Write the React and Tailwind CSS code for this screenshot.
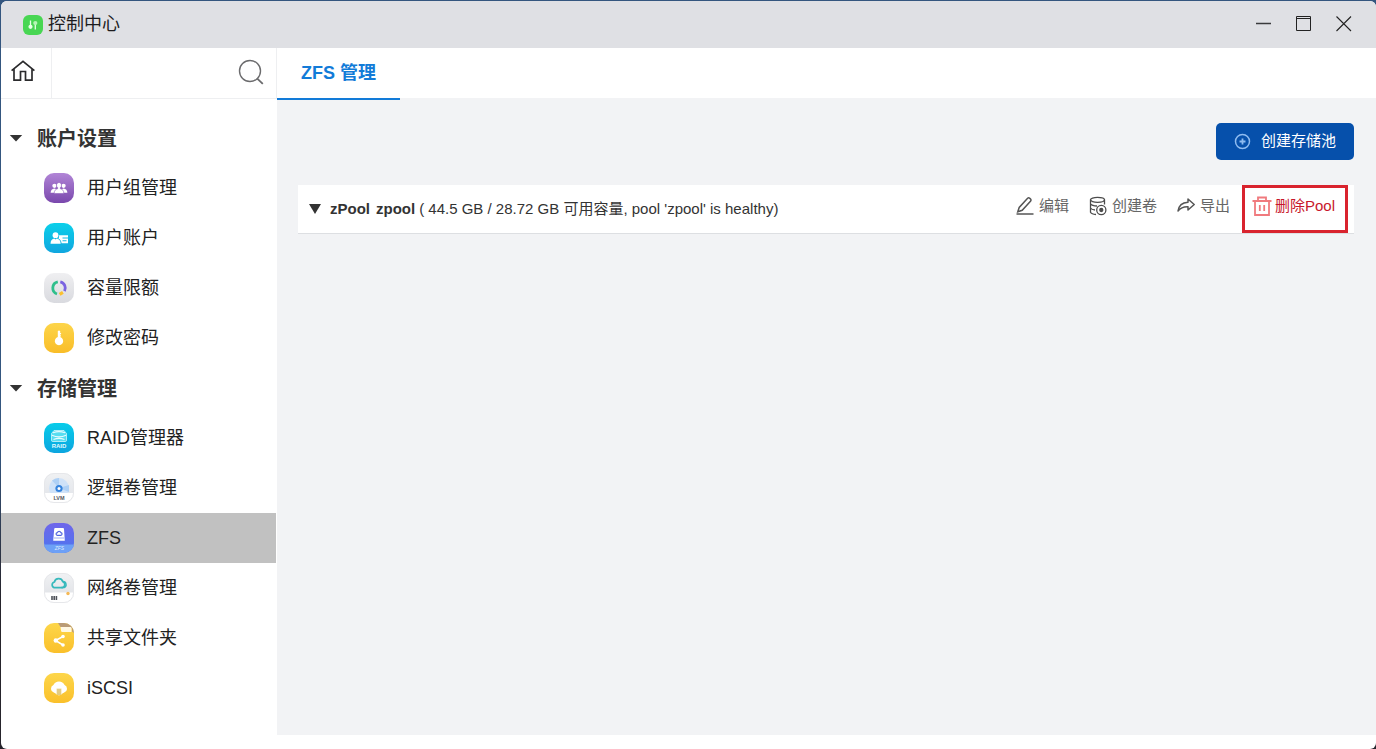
import React from "react";

function Tile({ id, from, to, children, ring }) {
  return (
    <svg viewBox="0 0 30 30" className="size-[30px] shrink-0" aria-hidden="true">
      <defs>
        <linearGradient id={id} x1="0" y1="0" x2="0" y2="1">
          <stop offset="0" stopColor={from} />
          <stop offset="1" stopColor={to} />
        </linearGradient>
        <clipPath id={id + "-clip"}>
          <rect width="30" height="30" rx="10" />
        </clipPath>
      </defs>
      <g clipPath={`url(#${id}-clip)`}>
        <rect width="30" height="30" fill={`url(#${id})`} />
        {children}
      </g>
      {ring && <rect x="0.5" y="0.5" width="29" height="29" rx="9.5" fill="none" stroke="#e6e7ea" />}
    </svg>
  );
}

const GroupIcon = () => (
  <Tile id="group" from="#b185d6" to="#7a48ad">
    <g fill="#fff">
      <circle cx="10.4" cy="12.8" r="2.1" />
      <circle cx="19.6" cy="12.8" r="2.1" />
      <path d="M6.600 19.800c0-2.500 1.600-3.900 3.700-4.300 1.200.2 1.700.6 1.900 1.100v3.200zM23.400 19.800c0-2.500-1.600-3.900-3.700-4.300-1.200.2-1.700.6-1.900 1.100v3.200z" />
      <path d="M15 9.400a2.700 2.900 0 0 1 1.300 5.300v1c2.200.5 3.500 1.800 3.500 4.800h-9.600c0-3 1.300-4.300 3.500-4.800v-1a2.700 2.900 0 0 1 1.300-5.300z" stroke="#8f60bd" strokeWidth=".6" />
    </g>
  </Tile>
);

const AccountIcon = () => (
  <Tile id="account" from="#0bd0ea" to="#10a6df">
    <g fill="#fff">
      <circle cx="11.500" cy="12.200" r="2.900" />
      <path d="M6.500 20.700c.1-3.200 1.600-4.700 3.900-5.200l1.100 1 1.100-1c2.300.5 4 2 4.100 5.200z" />
      <path d="M15 12.200h9v8h-6.400c-.2-2.100-1.200-3.800-3.200-4.700.6-.8.900-2 .6-3.300z" />
      <path d="M18.500 14.400h5.500v1.100h-5.500zM18.500 17.200h4v1.100h-4z" fill="#12b9e4" />
    </g>
  </Tile>
);

const QuotaIcon = () => (
  <Tile id="quota" from="#efeff1" to="#d9dadf">
    <g fill="none" strokeWidth="2.800">
      <path d="M13.800 8.900a6.300 6.300 0 0 0-.8 12.100" stroke="#2fbf8c" />
      <path d="M16.300 8.900a6.300 6.300 0 0 1 4.200 9.200" stroke="#7a63e0" />
      <path d="M15.600 21.300l3.300-2" stroke="#fbc02f" strokeWidth="3.200" />
    </g>
  </Tile>
);

const PasswordIcon = () => (
  <Tile id="password" from="#fdd54a" to="#f9bd28">
    <path d="M13.800 8q1.200-1 2.400 0v2h.9v1.300h-.9v1h.7v1.200h-.7v.6a4.200 4.200 0 1 1-2.400 0z" fill="#fff" />
  </Tile>
);

const RaidIcon = () => (
  <Tile id="raid" from="#08ccea" to="#0ca5df">
    <g fill="none" stroke="#e6fbff" strokeWidth="1">
      <path d="M10 7.500h10l2.500 3v6.800q0 1.200-1.200 1.200H8.700q-1.200 0-1.200-1.200v-6.800z" fill="#57ddf0" strokeWidth=".7" />
      <path d="M9 9.800q6-2.200 12 0M8 12.200q7 3.200 14 0M9.500 16.500q5.500-2.400 11 0" strokeWidth="1.200" />
    </g>
    <text x="15" y="24.500" textAnchor="middle" fontSize="6" fontWeight="700" fill="#e6fbff" fontFamily="Liberation Sans, sans-serif">RAID</text>
  </Tile>
);

const LvmIcon = () => (
  <Tile id="lvm" from="#f0f1f3" to="#dfe2e8" ring>
    <circle cx="15" cy="15" r="10" fill="#cfe2f8" />
    <path d="M15 15L8 7.500A10 10 0 0 1 15 5zM15 15l10-3v7z" fill="#aed0f5" />
    <circle cx="15" cy="15.500" r="3.600" fill="#3583dd" />
    <circle cx="15" cy="15.500" r="1.500" fill="#fff" />
    <rect y="20" width="30" height="10" fill="#fff" />
    <text x="15" y="26.500" textAnchor="middle" fontSize="5.500" fontWeight="700" fill="#55585e" fontFamily="Liberation Sans, sans-serif">LVM</text>
  </Tile>
);

const ZfsIcon = () => (
  <Tile id="zfs" from="#6f66ea" to="#4b76ef">
    <rect y="21.500" width="30" height="9" fill="#6da0f6" />
    <path d="M11.200 5h7.800q1 0 1 1l.8 11.700H9.200L10.200 6q0-1 1-1z" fill="#fff" />
    <path d="M13 12.300a1.400 1.400 0 0 1 .3-2.700 1.900 1.900 0 0 1 3.600 0 1.400 1.400 0 0 1 .2 2.700z" fill="none" stroke="#5568df" strokeWidth="1.200" />
    <path d="M10 15h10" stroke="#8b9bee" strokeWidth=".8" />
    <text x="15.500" y="27.400" textAnchor="middle" fontSize="5" fontStyle="italic" fill="#dce9ff" fontFamily="Liberation Sans, sans-serif">ZFS</text>
  </Tile>
);

const NetVolumeIcon = () => (
  <Tile id="netvol" from="#f1f2f4" to="#dcdee3" ring>
    <rect y="19.500" width="30" height="11" fill="#fff" />
    <path d="M10.200 14.600a2.900 2.900 0 0 1 .2-5.600 4.400 4.400 0 0 1 8.400-.4 3.200 3.200 0 0 1-.2 6z" fill="none" stroke="#37b9bc" strokeWidth="1.700" />
    <path d="M19 8.500a3.200 3.200 0 0 1 1.200 6.100h-3" fill="none" stroke="#37b9bc" strokeWidth="1.500" />
    <path d="M8 23v4M10.200 23v4M12.400 23v4" stroke="#50545b" strokeWidth="1.600" />
    <circle cx="24" cy="20.500" r="1.700" fill="#f5b957" />
  </Tile>
);

const ShareIcon = () => (
  <Tile id="share" from="#fdd64a" to="#fac02b">
    <path d="M14 0h16v10l-2-1.500V6q0-1-1-1h-9q-1 0-1.500-1z" fill="#b99b78" />
    <path d="M16.500 4h10q1 0 1 1v4h-9q-1.500 0-1.500-1.500z" fill="#fff8e2" />
    <path d="M19 13.500l-7.500 4 7.500 4.500" fill="none" stroke="#fff" strokeWidth="1.500" />
    <g fill="#fff">
      <circle cx="19" cy="13.500" r="1.800" />
      <circle cx="11.800" cy="17.500" r="2.200" />
      <circle cx="19" cy="22" r="1.800" />
    </g>
  </Tile>
);

const IscsiIcon = () => (
  <Tile id="iscsi" from="#fdd64a" to="#fac02b">
    <path d="M9.800 19.500a4 4 0 0 1-.4-7.500 6.200 6.200 0 0 1 11.200 0 4 4 0 0 1-.4 7.500L15 22.500z" fill="#fff" />
    <path d="M12.500 15.500h5v6.500h-5z" fill="#f1dfa4" />
    <path d="M13 17h4M13 19h4M13 21h4" stroke="#cfae57" strokeWidth=".8" />
  </Tile>
);

const sections = [
  {
    title: "账户设置",
    items: [
      ["用户组管理", GroupIcon],
      ["用户账户", AccountIcon],
      ["容量限额", QuotaIcon],
      ["修改密码", PasswordIcon],
    ],
  },
  {
    title: "存储管理",
    items: [
      ["RAID管理器", RaidIcon],
      ["逻辑卷管理", LvmIcon],
      ["ZFS", ZfsIcon],
      ["网络卷管理", NetVolumeIcon],
      ["共享文件夹", ShareIcon],
      ["iSCSI", IscsiIcon],
    ],
  },
];

function TitleBar() {
  return (
    <header className="flex h-[47px] shrink-0 items-center bg-[#dfe0e4] pb-[2px] pl-[22px] pr-6">
      <svg viewBox="0 0 20 20" className="mr-[5px] mt-[2px] size-5" aria-hidden="true">
        <rect width="20" height="20" rx="6" fill="#48d653" />
        <path d="M7.500 5.500v6M12.300 8.500v6" stroke="#e6ffe6" strokeWidth="1.300" />
        <circle cx="7.500" cy="11.800" r="2.100" fill="#e6ffe6" />
        <circle cx="12.300" cy="8" r="2.100" fill="#b5f5b5" />
      </svg>
      <h1 className="flex-1 text-[18px] leading-6 text-[#1c1c1e]">控制中心</h1>
      <div className="flex gap-6">
        <button type="button" aria-label="最小化">
          <svg viewBox="0 0 16 16" className="size-4" fill="none" stroke="#3a3a3c">
            <path d="M0 7.500h15" strokeWidth="1.400" />
          </svg>
        </button>
        <button type="button" aria-label="最大化">
          <svg viewBox="0 0 16 16" className="size-4" fill="none" stroke="#222">
            <path d="M.5.5h14v14H.5zM.5 2.500h14" />
          </svg>
        </button>
        <button type="button" aria-label="关闭">
          <svg viewBox="0 0 16 16" className="size-4" fill="none" stroke="#222">
            <path d="M.5.5l14.500 14.500M15 .5L.5 15" strokeWidth="1.100" />
          </svg>
        </button>
      </div>
    </header>
  );
}

function Sidebar() {
  return (
    <aside className="flex w-[276px] shrink-0 flex-col bg-white">
      <div className="flex h-[51px] border-b border-r border-[#eeeff1]">
        <a href="#home" aria-label="主页" className="flex w-[51px] items-center border-r border-[#eeeff1] pb-1 pl-[10px]">
          <svg viewBox="0 0 24 22" className="h-[22px] w-6" fill="none" stroke="#2b2b2d" strokeWidth="1.700">
            <path d="M.6 10.600L12 1.300l11.400 9.300M3 9v11.200h6.500v-8.700h5v8.700H21V9" />
          </svg>
        </a>
        <input type="text" aria-label="搜索" className="min-w-0 flex-1 px-3 text-[15px] outline-none" />
        <button type="button" aria-label="搜索" className="pb-[2px] pr-3">
          <svg viewBox="0 0 26 26" className="size-[26px]" fill="none" stroke="#6b6b6d" strokeWidth="1.400">
            <circle cx="12" cy="12" r="10.500" />
            <path d="M19 19.300l5.800 5.500" strokeWidth="1.800" />
          </svg>
        </button>
      </div>
      <nav className="pr-px pt-[14px]">
        {sections.map((s) => (
          <section key={s.title}>
            <h2>
              <button type="button" aria-expanded="true" className="flex h-[50px] w-full items-center pl-2 pt-[2px] text-[20px] font-bold text-[#333]">
                <svg viewBox="0 0 14 8" className="mr-[14px] h-2 w-[14px]" aria-hidden="true">
                  <path d="M.8 0h12.400L7 6.500z" fill="#333" />
                </svg>
                {s.title}
              </button>
            </h2>
            <ul>
              {s.items.map(([label, Icon]) => (
                <li key={label}>
                  <a
                    href={"#" + label}
                    aria-current={label === "ZFS" ? "page" : undefined}
                    className={
                      "flex h-[50px] items-center gap-[13px] pl-[43px] text-[18px] text-[#222] " +
                      (label === "ZFS" ? "bg-[#c1c1c1]" : "")
                    }
                  >
                    <Icon />
                    {label}
                  </a>
                </li>
              ))}
            </ul>
          </section>
        ))}
      </nav>
    </aside>
  );
}

const EditIcon = () => (
  <svg viewBox="0 0 18 20" className="h-5 w-[18px]" fill="none" stroke="#555" strokeWidth="1.500">
    <path d="M1.800 15.800l1.400-4.300L11.600 2.300q1-.9 2.200 0l.8.800q.9 1 .1 2L6.200 14.300zM.5 18h17" />
  </svg>
);

const VolumeIcon = () => (
  <svg viewBox="0 0 18 20" className="h-5 w-[18px]" fill="none" stroke="#4c4c4c" strokeWidth="1.300">
    <ellipse cx="8.500" cy="3.800" rx="7" ry="2.500" />
    <path d="M1.500 3.800v12.500q1 2 5.500 2.200M15.500 3.800v4.700M1.500 7.800q1.500 2 6.500 2.200M1.500 12q1.200 1.800 4.500 2" />
    <circle cx="12.300" cy="14" r="4.600" />
    <circle cx="12.300" cy="14" r="1.500" fill="#4c4c4c" />
  </svg>
);

const ExportIcon = () => (
  <svg viewBox="0 0 18 20" className="h-5 w-[18px]" fill="none" stroke="#555" strokeWidth="1.500" strokeLinejoin="round">
    <path d="M11 3l6.200 5.500L11 14v-3.300c-4.500-.2-7.500 1-10 4.300.7-5 4-8.500 10-8.800z" />
  </svg>
);

const TrashIcon = () => (
  <svg viewBox="0 0 20 20" className="size-5" fill="none" stroke="#f07a7e" strokeWidth="1.800">
    <path d="M.5 5h19M6 5V1.500h8V5M3 5v14h14V5M7.800 9v6M12.200 9v6" />
  </svg>
);

function PoolRow() {
  const action = "flex items-center gap-[5px] text-[15px] leading-5 text-[#666]";
  return (
    <section className="flex border-b border-[#dddfe2] bg-white">
      <h2 className="flex flex-1 items-center text-[15px] text-[#333]">
        <button type="button" aria-label="zPool" aria-expanded="true" className="pl-[11px] pr-[9px]">
          <svg viewBox="0 0 12 10" className="h-[10px] w-3" aria-hidden="true">
            <path d="M0 0h12L6 10z" fill="#333" />
          </svg>
        </button>
        <b className="mr-[6px]">zPool</b>
        <b className="mr-1">zpool</b>
        <span>( 44.5 GB / 28.72 GB 可用容量, pool 'zpool' is healthy)</span>
      </h2>
      <div className="flex pr-[6px]">
        <div className="flex items-center gap-5 pb-[6px] pr-3">
          <button type="button" className={action}><EditIcon />编辑</button>
          <button type="button" className={action}><VolumeIcon />创建卷</button>
          <button type="button" className={action}><ExportIcon />导出</button>
        </div>
        <div className="h-12 border-[3px] border-[#d9232e] px-[7px] pt-2">
          <button type="button" className="flex items-center gap-[3px] pr-[3px] text-[15px] leading-5 text-[#c8172b]">
            <TrashIcon />删除Pool
          </button>
        </div>
      </div>
    </section>
  );
}

export default function App() {
  return (
    <div className="flex min-h-screen flex-col bg-linear-to-b from-[#34567f] from-60% to-[#26242c] to-80% pl-px pt-px font-['Liberation_Sans','Noto_Sans_CJK_SC',sans-serif]">
      <div className="flex flex-1 flex-col overflow-hidden rounded-md bg-white">
        <TitleBar />
        <div className="flex flex-1 pb-[14px]">
          <Sidebar />
          <main className="flex min-w-0 flex-1 flex-col bg-[#f2f3f5]">
            <div role="tablist" className="flex h-[50px] shrink-0 bg-white">
              <button type="button" role="tab" aria-selected="true" className="h-[52px] border-b-2 border-[#127bd8] px-6 text-[18px] font-bold text-[#127bd8]">
                ZFS 管理
              </button>
            </div>
            <div className="flex flex-col gap-[25px] pl-[21px] pr-[22px] pt-[25px]">
              <button type="button" className="flex h-[37px] items-center gap-[10px] self-end rounded-[5px] bg-[#0650ab] px-[18px] text-[15px] text-white">
                <svg viewBox="0 0 17 17" className="size-[17px]" fill="none" stroke="#8fbcf0" strokeWidth="1.500" aria-hidden="true">
                  <circle cx="8.500" cy="8.500" r="7" />
                  <path d="M8.500 5.500v6M5.500 8.500h6" strokeWidth="1.800" />
                </svg>
                创建存储池
              </button>
              <PoolRow />
            </div>
          </main>
        </div>
      </div>
    </div>
  );
}
